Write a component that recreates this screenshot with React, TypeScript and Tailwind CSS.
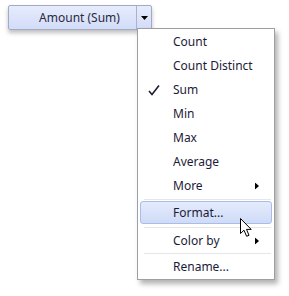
import { ReactNode } from "react";

const FONT = { fontFamily: '"Segoe UI", "Noto Sans", "Open Sans", sans-serif' };

function SubArrow() {
  return (
    <svg width="4" height="7" viewBox="0 0 4 7" className="absolute right-[12px] top-1/2 -translate-y-1/2">
      <path d="M0 0 L4 3.5 L0 7 Z" fill="#000" />
    </svg>
  );
}

function Item({
  children,
  checked,
  sub,
  active,
  h = "h-[24px]",
}: {
  children: ReactNode;
  checked?: boolean;
  sub?: boolean;
  active?: boolean;
  h?: string;
}) {
  return (
    <div
      className={
        "relative flex items-center pl-[32px] mx-[2px] rounded-[3px] border " +
        h +
        " " +
        (active
          ? "border-[#a9bde8] bg-gradient-to-b from-[#e4ebfc] to-[#cfdbf7]"
          : "border-transparent")
      }
    >
      {checked && (
        <svg width="12" height="11" viewBox="0 0 12 11" className="absolute left-[7px] top-[6px]">
          <path d="M1 6 L4 9.5 L11 0.5" fill="none" stroke="#1d1d2e" strokeWidth="1.6" />
        </svg>
      )}
      <span className="text-[12px] text-[#1b1b38]">{children}</span>
      {sub && <SubArrow />}
    </div>
  );
}

function Separator() {
  return <div className="h-px bg-[#e6e6e6] ml-[6px] mr-[3px] my-[1px]" />;
}

export default function App() {
  return (
    <div className="relative w-[289px] h-[296px] bg-white overflow-hidden" style={FONT}>
      <div className="absolute left-[8px] top-[5px] w-[144px] h-[25px] flex rounded-[2px] border border-[#a2abc4] bg-gradient-to-b from-[#e6ecfd] to-[#d3dcf8] shadow-[0_3px_4px_rgba(0,0,0,0.25)]">
        <div className="flex-1 flex items-center justify-center pl-[14px] text-[12px] text-[#2a2a3a]">
          Amount (Sum)
        </div>
        <div className="w-px bg-[#a9b2c8]" />
        <div className="w-[14px] flex items-center justify-center">
          <svg width="7" height="4" viewBox="0 0 7 4">
            <path d="M0 0 H7 L3.5 4 Z" fill="#000" />
          </svg>
        </div>
      </div>

      <div className="absolute left-[137px] top-[28px] w-[138px] h-[252px] bg-white border border-[#9e9ea6] pt-[1px] shadow-[3px_4px_5px_rgba(0,0,0,0.3)]">
        <Item>Count</Item>
        <Item>Count Distinct</Item>
        <Item checked>Sum</Item>
        <Item>Min</Item>
        <Item>Max</Item>
        <Item>Average</Item>
        <Item sub>More</Item>
        <Separator />
        <Item active h="h-[23px]">Format...</Item>
        <div className="h-[6px] flex items-center">
          <div className="flex-1 h-px bg-[#e6e6e6] ml-[6px] mr-[3px]" />
        </div>
        <Item sub h="h-[22px]">Color by</Item>
        <Separator />
        <Item h="h-[23px]">Rename...</Item>
      </div>

      <svg width="13" height="20" viewBox="0 0 13 20" className="absolute left-[240px] top-[218px]">
        <path
          d="M0.5 0.5 L0.5 15.5 L4 12.2 L6.6 18.3 L9 17.3 L6.5 11.4 L11.2 11.4 Z"
          fill="#fff"
          stroke="#000"
          strokeWidth="1"
          strokeLinejoin="round"
        />
      </svg>
    </div>
  );
}
